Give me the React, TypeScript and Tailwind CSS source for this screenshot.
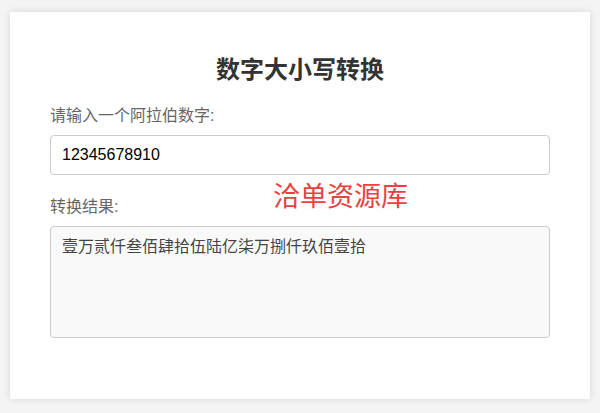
export default function App() {
  return (
    <div className="min-h-[413px] bg-[#f4f4f4] px-[10px] pt-[12px] pb-[14px] font-['Liberation_Sans','Noto_Sans_CJK_SC',sans-serif]">
      <div className="relative bg-white px-10 pt-10 pb-[61px] shadow-[0_0_8px_rgba(0,0,0,0.12)]">
        <h1 className="text-center text-[24px] leading-[36px] font-bold text-[#333]">
          数字大小写转换
        </h1>

        <label className="mt-4 block text-[16px] leading-[24px] text-[#666]">
          请输入一个阿拉伯数字:
        </label>
        <input
          type="text"
          defaultValue="12345678910"
          className="mt-[7px] block h-10 w-full rounded border border-[#ccc] px-[11px] text-[16px] text-black outline-none"
        />

        <label className="mt-5 block text-[16px] leading-[24px] text-[#666]">
          转换结果:
        </label>
        <textarea
          readOnly
          value="壹万贰仟叁佰肆拾伍陆亿柒万捌仟玖佰壹拾"
          className="mt-[7px] block h-[112px] w-full resize-none rounded border border-[#ccc] bg-[#f9f9f9] px-[11px] py-[10px] text-[16px] leading-[20px] text-[#444] outline-none"
        />

        {/* watermark */}
        <div className="pointer-events-none absolute top-[165px] left-[263px] text-[27px] leading-[40px] text-[#e8413f]">
          洽单资源库
        </div>
      </div>
    </div>
  );
}
